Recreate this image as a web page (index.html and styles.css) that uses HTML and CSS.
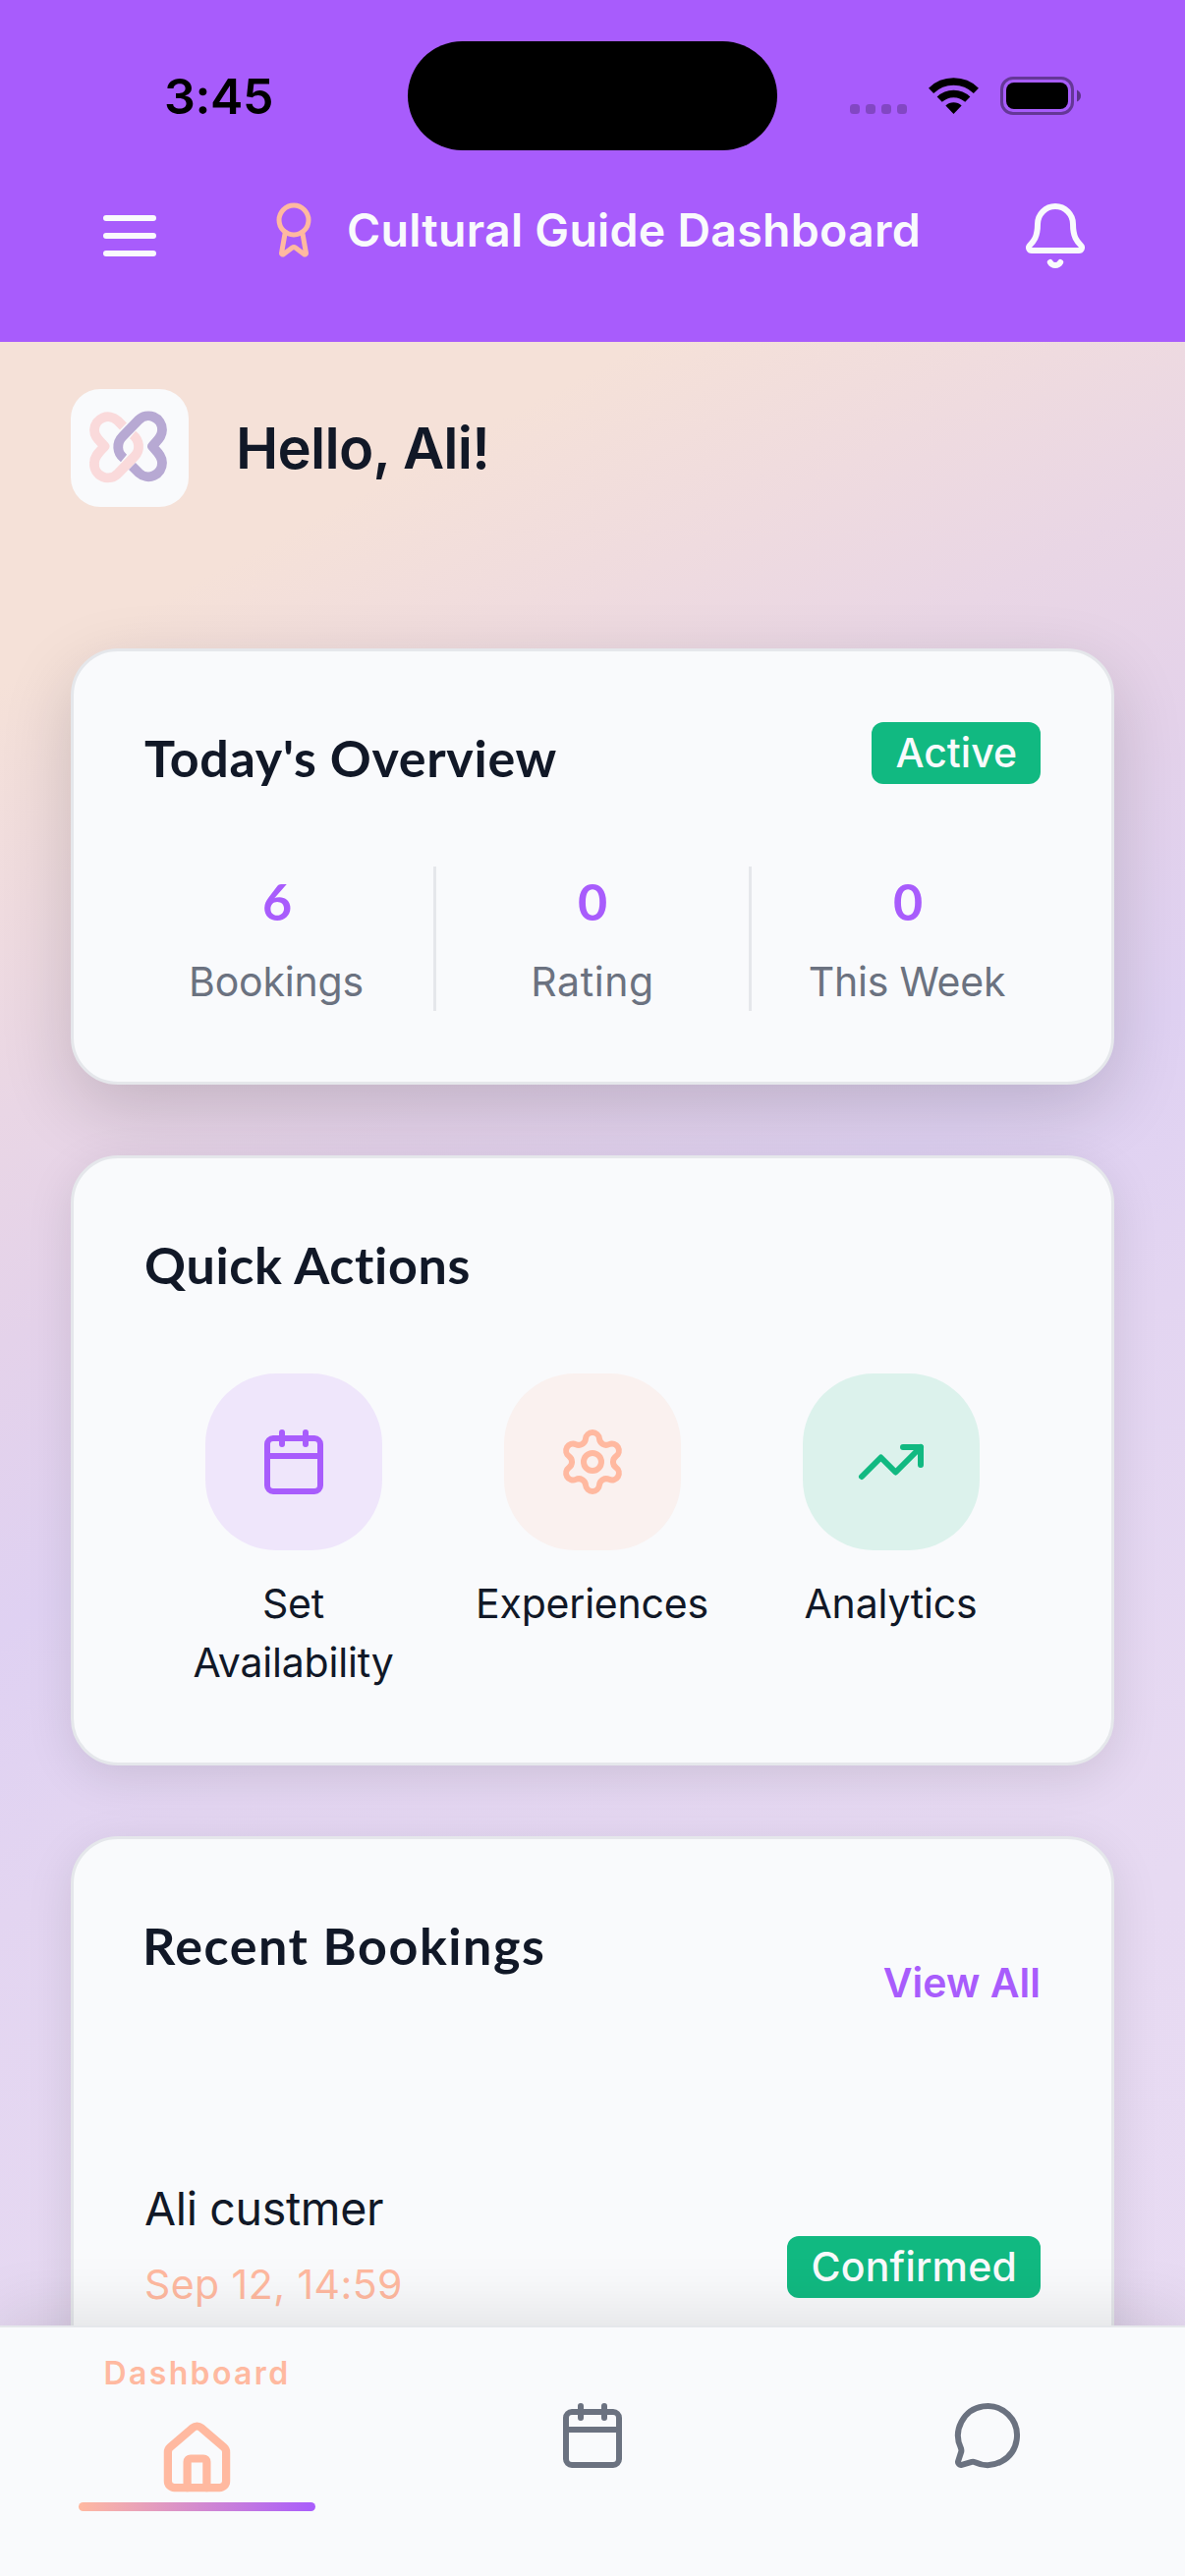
FILE: index.html
```
<!DOCTYPE html>
<html lang="en">
<head>
<meta charset="utf-8">
<title>Cultural Guide Dashboard</title>
<link rel="stylesheet" href="styles.css">
</head>
<body>
<div class="app">
  <header class="header">
    <div class="status-bar">
      <span class="status-time">3:45</span>
      <span class="island"></span>
      <div class="status-icons">
        <svg class="signal" viewBox="0 0 58 10" aria-hidden="true">
          <rect x="0" width="10" height="10" rx="3.5"/><rect x="16" width="10" height="10" rx="3.5"/><rect x="32" width="10" height="10" rx="3.5"/><rect x="48" width="10" height="10" rx="3.5"/>
        </svg>
        <svg class="wifi" viewBox="0 0 51 37" aria-hidden="true">
          <path class="wifi-arc" d="M2.6 13.3A33 33 0 0 1 48.4 13.3"/>
          <path class="wifi-arc" d="M11.2 22.2A20.6 20.6 0 0 1 39.8 22.2"/>
          <path d="M25.5 37L17.4 28.6A11.7 11.7 0 0 1 33.6 28.6Z"/>
        </svg>
        <svg class="battery" viewBox="0 0 82 39" aria-hidden="true">
          <rect class="battery-shell" x="1.5" y="1.5" width="72" height="36" rx="11.5"/>
          <rect x="6" y="6" width="63" height="27" rx="8"/>
          <path class="battery-nub" d="M78 13.5Q82 15.5 82 19.5T78 25.5Z"/>
        </svg>
      </div>
    </div>
    <div class="nav-bar">
      <svg class="icon icon-bar" viewBox="0 0 24 24"><path d="M4 6h16M4 12h16M4 18h16"/></svg>
      <div class="nav-title">
        <svg class="icon icon-award" viewBox="0 0 24 24"><path d="m15.477 12.89 1.515 8.526a.5.5 0 0 1-.81.47l-3.58-2.687a1 1 0 0 0-1.197 0l-3.586 2.686a.5.5 0 0 1-.81-.469l1.514-8.526"/><circle cx="12" cy="8" r="6"/></svg>
        <h1 class="title">Cultural Guide Dashboard</h1>
      </div>
      <svg class="icon icon-bar" viewBox="0 0 24 24"><path d="M10.268 21a2 2 0 0 0 3.464 0"/><path d="M3.262 15.326A1 1 0 0 0 4 17h16a1 1 0 0 0 .74-1.673C19.41 13.956 18 12.499 18 8A6 6 0 0 0 6 8c0 4.499-1.411 5.956-2.738 7.326"/></svg>
    </div>
  </header>

  <main class="content">
    <section class="greeting">
      <div class="logo">
        <svg viewBox="0 0 120 120" aria-hidden="true">
          <path class="logo-pink" d="M53.5 38L47.5 32A14 14 0 0 0 24 41.5C24 49 29 52 34.5 58.3C29 64 24 68 24 75A14 14 0 0 0 48.5 85.5L64.5 69C71.5 62 70 52 63 46.5"/>
          <path class="logo-purple" d="M54 70.5C47 65 46 55 53 48L69 31.5A14 14 0 0 1 93 41.5C93 49 88 52 83 58.3C88 64 93 68 93 75A14 14 0 0 1 69.5 85.5L62.5 78.5"/>
        </svg>
      </div>
      <h2 class="hello">Hello, Ali!</h2>
    </section>

    <section class="card card-raised">
      <div class="card-head">
        <h3 class="card-title">Today's Overview</h3>
        <span class="badge">Active</span>
      </div>
      <div class="stats">
        <div class="stat"><span class="stat-value">6</span><span class="stat-label">Bookings</span></div>
        <div class="stat"><span class="stat-value">0</span><span class="stat-label rating">Rating</span></div>
        <div class="stat"><span class="stat-value">0</span><span class="stat-label">This Week</span></div>
      </div>
    </section>

    <section class="card">
      <div class="card-head">
        <h3 class="card-title">Quick Actions</h3>
      </div>
      <div class="actions">
        <div class="action">
          <span class="bubble violet"><svg class="icon" viewBox="0 0 24 24"><path d="M8 2v4M16 2v4M3 10h18"/><rect x="3" y="4" width="18" height="18" rx="2"/></svg></span>
          <span class="action-label">Set<br>Availability</span>
        </div>
        <div class="action">
          <span class="bubble peach"><svg class="icon" viewBox="0 0 24 24"><path d="M9.671 4.136a2.34 2.34 0 0 1 4.659 0 2.34 2.34 0 0 0 3.319 1.915 2.34 2.34 0 0 1 2.33 4.033 2.34 2.34 0 0 0 0 3.831 2.34 2.34 0 0 1-2.33 4.033 2.34 2.34 0 0 0-3.319 1.915 2.34 2.34 0 0 1-4.659 0 2.34 2.34 0 0 0-3.32-1.915 2.34 2.34 0 0 1-2.33-4.033 2.34 2.34 0 0 0 0-3.831A2.34 2.34 0 0 1 6.35 6.051a2.34 2.34 0 0 0 3.319-1.915"/><circle cx="12" cy="12" r="3"/></svg></span>
          <span class="action-label">Experiences</span>
        </div>
        <div class="action">
          <span class="bubble green"><svg class="icon" viewBox="0 0 24 24"><path d="M16 7h6v6"/><path d="m22 7-8.5 8.5-5-5L2 17"/></svg></span>
          <span class="action-label">Analytics</span>
        </div>
      </div>
    </section>

    <section class="card">
      <div class="card-head bookings-head">
        <h3 class="card-title recent">Recent Bookings</h3>
        <a class="view-all">View All</a>
      </div>
      <div class="booking">
        <div class="booking-info">
          <span class="booking-name">Ali custmer</span>
          <span class="booking-date">Sep 12, 14:59</span>
        </div>
        <span class="badge booking-badge">Confirmed</span>
      </div>
    </section>
  </main>

  <nav class="tabs">
    <a class="tab active">
      <span class="tab-label">Dashboard</span>
      <svg class="icon icon-home" viewBox="0 0 24 24"><path d="M15 21v-8a1 1 0 0 0-1-1h-4a1 1 0 0 0-1 1v8"/><path d="M3 10a2 2 0 0 1 .709-1.528l7-5.999a2 2 0 0 1 2.582 0l7 5.999A2 2 0 0 1 21 10v9a2 2 0 0 1-2 2H5a2 2 0 0 1-2-2z"/></svg>
      <span class="tab-indicator"></span>
    </a>
    <a class="tab"><svg class="icon" viewBox="0 0 24 24"><path d="M8 2v4M16 2v4M3 10h18"/><rect x="3" y="4" width="18" height="18" rx="2"/></svg></a>
    <a class="tab"><svg class="icon" viewBox="0 0 24 24"><path d="M2.992 16.342a2 2 0 0 1 .094 1.167l-1.065 3.29a1 1 0 0 0 1.236 1.168l3.413-.998a2 2 0 0 1 1.099.092 10 10 0 1 0-4.777-4.719"/></svg></a>
  </nav>
</div>
</body>
</html>
```
FILE: styles.css
```
:root {
  --violet: #a85cfc;
  --peach: #ffb9a0;
  --green: #11b981;
  --surface: #f9fafc;
  --line: #e5e7eb;
  --ink: #111827;
  --muted: #6b7280;
}

* { box-sizing: border-box; }

body {
  margin: 0;
  font-family: Inter, "Liberation Sans", sans-serif;
  color: var(--ink);
}

h1, h2, h3 { margin: 0; }

.app {
  display: flex;
  flex-direction: column;
  width: 1206px;
  height: 2622px;
  overflow: hidden;
}

.icon {
  display: block;
  flex: none;
  width: 72px;
  height: 72px;
  fill: none;
  stroke: currentColor;
  stroke-width: 2;
  stroke-linecap: round;
  stroke-linejoin: round;
}

/* Header */
.header {
  flex: none;
  height: 348px;
  background: var(--violet);
}

.status-bar {
  display: grid;
  grid-template-columns: 415px 376px 415px;
  align-items: center;
  height: 195px;
}

.status-time {
  padding: 1px 0 0 167px;
  font-size: 50px;
  line-height: 60px;
  font-weight: 600;
  letter-spacing: -0.35px;
  color: #000;
}

.island {
  height: 111px;
  border-radius: 56px;
  background: #000;
}

.status-icons {
  display: flex;
  align-items: center;
  padding-left: 74px;
}

.signal {
  width: 58px;
  height: 10px;
  margin: 27px 22px 0 0;
  opacity: 0.22;
}

.wifi { width: 51px; height: 37px; margin-right: 22px; }
.wifi-arc { fill: none; stroke: #000; stroke-width: 7.4; }
.battery { width: 82px; height: 39px; }
.battery-shell { fill: none; stroke: #000; stroke-width: 3; opacity: 0.4; }
.battery-nub { opacity: 0.45; }

.nav-bar {
  display: flex;
  justify-content: space-between;
  padding: 9px 96px 0;
  color: var(--surface);
}

.nav-title {
  display: flex;
  align-items: center;
  gap: 24px;
  height: 60px;
}

.icon-award { width: 60px; height: 60px; color: var(--peach); }

.title {
  font-size: 46.5px;
  line-height: 60px;
  font-weight: 600;
  letter-spacing: 0.25px;
  white-space: nowrap;
}

/* Scrolling content */
.content {
  flex: 1;
  min-height: 0;
  overflow: hidden;
  padding: 48px 72px 0;
  background: linear-gradient(152deg, #f5e1d8 0%, #f5e1d8 12%, #efdbdf 20%, #e9d6e5 27%, #e4d2ea 35%, #dfd1f2 45%, #e3d5f1 55%, #e7daf2 75%, #e8dbf3 100%) 0 0 / 100% 2274px no-repeat;
}

.greeting {
  display: flex;
  align-items: center;
  gap: 48px;
  margin-bottom: 144px;
}

.logo {
  width: 120px;
  height: 120px;
  border-radius: 30px;
  background: var(--surface);
}

.logo path { fill: none; stroke-width: 9.8; stroke-linejoin: round; }
.logo .logo-pink { stroke: #fadadb; }
.logo .logo-purple { stroke: #b7a9d3; }

.hello {
  font-size: 58px;
  line-height: 72px;
  font-weight: 600;
  letter-spacing: -0.75px;
}

.card {
  margin-bottom: 72px;
  padding: 72px;
  border: 3px solid var(--line);
  border-radius: 48px;
  background: var(--surface);
  box-shadow: 0 12px 48px rgba(0, 0, 0, 0.1);
}

.card-raised { box-shadow: 0 24px 72px rgba(0, 0, 0, 0.16); }

.card-head {
  display: flex;
  justify-content: space-between;
  align-items: flex-start;
  height: 72px;
  margin-bottom: 75px;
}

.card-title {
  font-family: Lato, Inter, sans-serif;
  font-size: 52px;
  line-height: 72px;
  font-weight: 700;
  letter-spacing: 0.7px;
}

.card-title.recent { letter-spacing: 1.55px; margin-left: -2px; }

.badge {
  padding: 0 24px;
  border-radius: 12px;
  background: var(--green);
  color: var(--surface);
  font-size: 41px;
  line-height: 63px;
  font-weight: 500;
}

/* Overview stats */
.stats {
  display: grid;
  grid-template-columns: 321px 321px 318px;
  margin: 0 -24px;
}

.stat {
  display: flex;
  flex-direction: column;
  align-items: center;
  gap: 16px;
  height: 147px;
  border-right: 3px solid var(--line);
}

.stat:last-child { border-right: 0; }

.stat-value {
  font-family: Lato, Inter, sans-serif;
  font-size: 52px;
  line-height: 71px;
  font-weight: 700;
  color: var(--violet);
}

.stat-label {
  font-size: 41px;
  line-height: 60px;
  margin-right: 2px;
  letter-spacing: -0.2px;
  color: var(--muted);
}

.stat-label.rating { margin-right: 0; letter-spacing: 0.6px; }

/* Quick actions */
.actions {
  display: grid;
  grid-template-columns: repeat(3, 1fr);
}

.action {
  display: flex;
  flex-direction: column;
  align-items: center;
  gap: 24px;
}

.bubble {
  display: grid;
  place-items: center;
  width: 180px;
  height: 180px;
  border-radius: 72px;
}

.violet { background: #efe6fb; color: var(--violet); }
.peach { background: #faf1ef; color: var(--peach); }
.green { background: #dcf2ec; color: var(--green); }

.action-label {
  margin-right: 1px;
  font-size: 41px;
  line-height: 60px;
  letter-spacing: -0.2px;
  text-align: center;
}

/* Recent bookings */
.bookings-head { margin-bottom: 196px; }

.view-all {
  margin-top: 44px;
  font-size: 41px;
  line-height: 60px;
  font-weight: 600;
  color: var(--violet);
}

.booking {
  display: flex;
  justify-content: space-between;
  align-items: flex-start;
}

.booking-info {
  display: flex;
  flex-direction: column;
  gap: 11px;
}

.booking-name { font-size: 46.5px; line-height: 72px; letter-spacing: -0.33px; }
.booking-date { font-size: 41px; line-height: 60px; letter-spacing: 0.44px; color: var(--peach); }
.booking-badge { margin-top: 64px; letter-spacing: 0.2px; }

/* Bottom tabs */
.tabs {
  position: relative;
  flex: none;
  display: grid;
  grid-template-columns: repeat(3, 1fr);
  height: 255px;
  border-top: 2px solid var(--line);
  background: var(--surface);
  box-shadow: 0 -12px 60px rgba(0, 0, 0, 0.1);
}

.tab {
  display: flex;
  flex-direction: column;
  align-items: center;
  padding-top: 74px;
  color: var(--muted);
}

.tab.active { padding: 27px 1px 0 0; color: var(--peach); }

.tab-label {
  margin-bottom: 27px;
  font-size: 32px;
  line-height: 40px;
  font-weight: 600;
  letter-spacing: 2.35px;
}

.icon-home { width: 79px; height: 79px; stroke-width: 2.5; }

.tab-indicator {
  width: 241px;
  height: 9px;
  margin-top: 5px;
  border-radius: 4.5px;
  background: linear-gradient(90deg, var(--peach), var(--violet));
}
```
